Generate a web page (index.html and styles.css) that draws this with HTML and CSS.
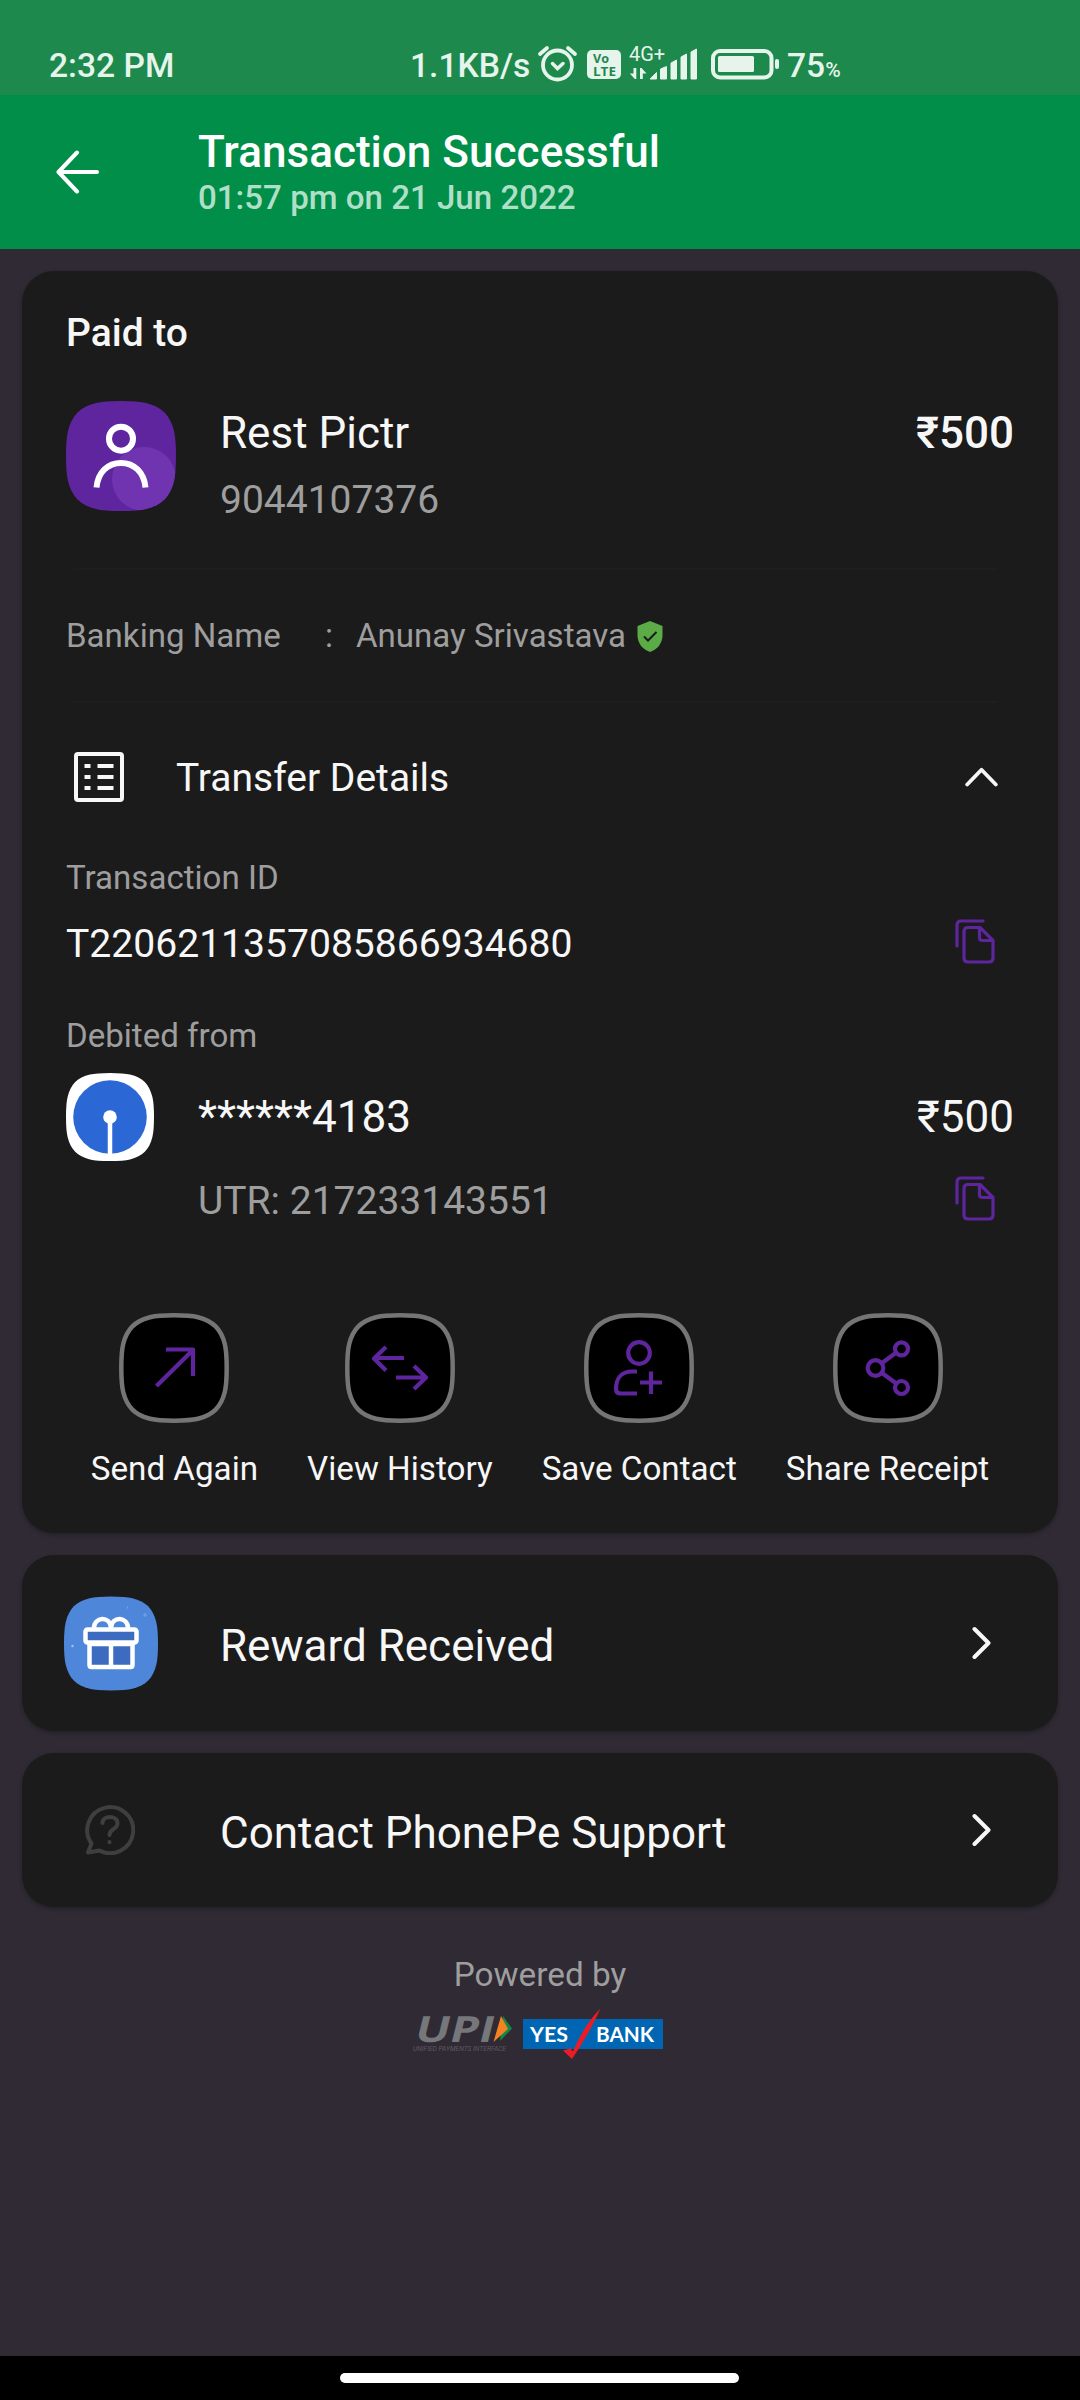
FILE: index.html
```html
<!DOCTYPE html>
<html lang="en">
<head>
<meta charset="utf-8">
<title>Transaction Successful</title>
<link rel="stylesheet" href="styles.css">
</head>
<body>
<svg class="defs" width="0" height="0">
  <symbol id="squircle" viewBox="0 0 110 110"><path d="M55 0Q72 0 80 2C96 6 104 14 108 30Q110 38 110 55Q110 72 108 80C104 96 96 104 80 108Q72 110 55 110Q38 110 30 108C14 104 6 96 2 80Q0 72 0 55Q0 38 2 30C6 14 14 6 30 2Q38 0 55 0Z"/></symbol>
  <symbol id="copy" viewBox="0 0 40 45"><g fill="none" stroke="#5f259f" stroke-width="3.2" stroke-linecap="round" stroke-linejoin="round"><path d="M2 27V6Q2 2 6 2H28"/><path d="M13 8.5H25L38 21.500V39Q38 43 34 43H13Q9 43 9 39V12.500Q9 8.500 13 8.500Z"/><path d="M24.500 9V18.500Q24.500 21.500 27.500 21.500H37"/></g></symbol>
  <symbol id="tile" viewBox="0 0 110 110"><path fill="#000" stroke="#757575" stroke-width="4.500" d="M55 2.300Q71 2.300 79 4.200C94 8 102 16 105.800 31Q107.700 39 107.700 55Q107.700 71 105.800 79C102 94 94 102 79 105.800Q71 107.700 55 107.700Q39 107.700 31 105.800C16 102 8 94 4.200 79Q2.300 71 2.300 55Q2.300 39 4.200 31C8 16 16 8 31 4.200Q39 2.300 55 2.300Z"/></symbol>
</svg>
<div class="screen">
  <div class="status">
    <span class="time">2:32 PM</span>
    <span class="speed">1.1KB/s</span>
    <svg class="status-icons" width="244" height="44" viewBox="536 42 244 44" fill="#e6f4ec">
      <g fill="none" stroke="#e6f4ec" stroke-linecap="round"><circle cx="557.500" cy="65" r="14.500" stroke-width="3.800"/><path d="M552.500 63.500l5 5 5.500-5" stroke-width="3.500"/><path d="M540 54l7-6M575 54l-7-6" stroke-width="3.800"/></g>
      <rect x="587" y="50" width="34" height="29" rx="5"/>
      <g fill="#1d894d" class="volte"><text x="593" y="62.500" textLength="16" lengthAdjust="spacingAndGlyphs">Vo</text><text x="593" y="75.500" textLength="23" lengthAdjust="spacingAndGlyphs">LTE</text></g>
      <text class="net" x="629" y="61" textLength="36">4G+</text>
      <path d="M633.500 68h2.800v11h-1.500l-5-5.500h3.700zM640 79h2.800v-5.500h3.700l-5-5.500H640z"/>
      <path d="M650 79l6.500-6.500V79zM660.500 69l6-2.500V79h-6zM671 63l5.500-3V79H671zM681 57l5.500-3V79H681zM691 52l5.500-3V79H691z" stroke="#e6f4ec" stroke-width="1" stroke-linejoin="round"/>
      <rect x="713" y="51" width="58.500" height="26.500" rx="7" fill="none" stroke="#e6f4ec" stroke-width="4"/><rect x="718" y="56" width="36" height="16" rx="1.500"/><rect x="775" y="59" width="4" height="10" rx="2"/>
    </svg>
    <span class="battery">75<small>%</small></span>
  </div>
  <header class="header">
    <svg width="44" height="44" viewBox="0 0 44 44" fill="none" stroke="#fff" stroke-width="4" stroke-linecap="round" stroke-linejoin="round"><path d="M41 22H2.500M21 2.500L2.500 22 21 41.500"/></svg>
    <div><h1>Transaction Successful</h1><p>01:57 pm on 21 Jun 2022</p></div>
  </header>
  <main>
    <section class="card paid">
      <h2>Paid to</h2>
      <div class="payee">
        <svg width="110" height="110" viewBox="0 0 110 110"><clipPath id="clip"><path d="M55 0Q72 0 80 2C96 6 104 14 108 30Q110 38 110 55Q110 72 108 80C104 96 96 104 80 108Q72 110 55 110Q38 110 30 108C14 104 6 96 2 80Q0 72 0 55Q0 38 2 30C6 14 14 6 30 2Q38 0 55 0Z"/></clipPath><use href="#squircle" fill="#5f259f"/><circle cx="78" cy="78" r="32" fill="#7034b1" clip-path="url(#clip)"/><g fill="none" stroke="#fff" stroke-width="6"><circle cx="55" cy="37.700" r="12"/><path d="M30.500 86.500C32 71 42 62 55 62S78 71 79.500 86.500"/></g></svg>
        <div class="grow"><div class="big">Rest Pictr</div><div class="phone">9044107376</div></div>
        <div class="amount medium">₹500</div>
      </div>
      <hr>
      <div class="banking"><span class="key">Banking Name</span><span class="colon">:</span><span>Anunay Srivastava</span>
        <svg width="26" height="31" viewBox="0 0 26 31"><path fill="#5bac46" d="M13 0L25.500 5V14C25.500 22 21 28 13 31C5 28 .5 22 .5 14V5Z"/><path d="M7 15.500l4 4 8.500-8.500" fill="none" stroke="#1b1b1b" stroke-width="2"/></svg>
      </div>
      <hr>
      <div class="transfer">
        <svg width="50" height="50" viewBox="0 0 50 50" fill="none" stroke="#f7f7f7"><rect x="2" y="2" width="46" height="46" rx="2" stroke-width="4"/><path d="M10.500 14h6M10.500 25h6M10.500 36h6M23.500 14h16M23.500 25h16M23.500 36h16" stroke-width="4"/></svg>
        <span class="grow">Transfer Details</span>
        <svg width="33" height="20" viewBox="0 0 33 20" fill="none" stroke="#f7f7f7" stroke-width="3.800" stroke-linecap="round" stroke-linejoin="round"><path d="M2.200 17.500L16.500 2.800 30.800 17.500"/></svg>
      </div>
      <div class="label txn-label">Transaction ID</div>
      <div class="copy-row txn"><span>T2206211357085866934680</span><svg width="40" height="45"><use href="#copy"/></svg></div>
      <div class="label debit-label">Debited from</div>
      <div class="account">
        <svg width="88" height="88" viewBox="0 0 88 88"><use href="#squircle" fill="#fff"/><circle cx="44" cy="44" r="36.800" fill="#2c68d5"/><circle cx="44" cy="44" r="6.800" fill="#fff"/><path d="M44 44V82" stroke="#fff" stroke-width="4.500"/></svg>
        <span class="grow">******4183</span><span class="amount">₹500</span>
      </div>
      <div class="copy-row utr"><span>UTR: 217233143551</span><svg width="40" height="45"><use href="#copy"/></svg></div>
      <div class="actions">
        <div class="action"><svg width="110" height="110" viewBox="0 0 110 110"><use href="#tile"/><path d="M37.500 73L74 37M47 36.500H74V63" class="line"/></svg><span>Send Again</span></div>
        <div class="action"><svg width="110" height="110" viewBox="0 0 110 110"><use href="#tile"/><path d="M59 45H29M41 34L29 45.500 41 57.500M51 64.500H81M69 53L81 64.500 69 76" class="line"/></svg><span>View History</span></div>
        <div class="action"><svg width="110" height="110" viewBox="0 0 110 110"><use href="#tile"/><circle cx="55" cy="40" r="10.800" class="line"/><path d="M53 58.500H48C37 58.500 32 66 32 76Q32 80.500 36.500 80.500H53M56 69.500H78M67 58.500V81" class="line"/></svg><span>Save Contact</span></div>
        <div class="action"><svg width="110" height="110" viewBox="0 0 110 110"><use href="#tile"/><g class="line"><circle cx="42.500" cy="55" r="7.800"/><circle cx="68.500" cy="35.800" r="6.500"/><circle cx="68.500" cy="74.500" r="6.500"/><path d="M49 50L63 39.800M49 60L63 70.300"/></g></svg><span>Share Receipt</span></div>
      </div>
    </section>
    <section class="card link reward">
      <svg class="gift" width="94" height="95" viewBox="0 0 94 95"><use href="#squircle" fill="#4e86da" width="94" height="95"/><circle cx="8.500" cy="50" r="1.200" fill="#a7c2ec"/><path d="M81 17v4M79 19h4M63.500 10.500v2" stroke="#79a3e3" stroke-width="1"/><g fill="#3c6bc0" stroke="#fff" stroke-width="4.500" stroke-linejoin="round"><path d="M25.500 48H68.500V69Q68.500 71 66.500 71H27.500Q25.500 71 25.500 69Z"/><path d="M47 48V71"/><path d="M30 32C30 21 46 19 47 32C48 19 64 21 64 32" fill="none"/><rect x="21.500" y="33.500" width="51" height="13" rx="2"/></g></svg>
      <span class="grow">Reward Received</span>
      <svg class="chev" width="20" height="34" viewBox="0 0 20 34"><path d="M2.500 3L16.500 17 2.500 31"/></svg>
    </section>
    <section class="card link support">
      <svg class="help" width="50" height="50" viewBox="0 0 50 50" fill="none" stroke="#3f3f3f" stroke-width="4" stroke-linecap="round" stroke-linejoin="round"><path d="M6.500 38.500A23 23 0 1 1 14.500 45.500L3 47.500Z"/><path d="M17.500 18C17.500 10 32.500 9.500 32.500 18.500C32.500 24.500 24.500 23.500 24.500 30"/><path d="M24.500 37v.2"/></svg>
      <span class="grow">Contact PhonePe Support</span>
      <svg class="chev" width="20" height="34" viewBox="0 0 20 34"><path d="M2.500 3L16.500 17 2.500 31"/></svg>
    </section>
  </main>
  <footer>
    <p>Powered by</p>
    <svg width="272" height="64" viewBox="402 2000 272 64">
      <text class="upi" transform="translate(413 2041.500) skewX(-14)" x="0" y="0" textLength="79" lengthAdjust="spacingAndGlyphs">UPI</text>
      <path d="M503 2016l9 12.500L500 2041z" fill="#128a46"/><path d="M501 2016l7 13L493.500 2042z" fill="#f58220"/>
      <text class="upi-sub" x="413" y="2050.500" textLength="93" lengthAdjust="spacingAndGlyphs">UNIFIED PAYMENTS INTERFACE</text>
      <rect x="523" y="2019" width="140" height="30" fill="#0066b3"/>
      <text class="bank" x="530" y="2041.500" textLength="38" lengthAdjust="spacingAndGlyphs">YES</text><text class="bank" x="596" y="2041.500" textLength="58" lengthAdjust="spacingAndGlyphs">BANK</text>
      <path d="M563 2050.500l7.500-2 2.500 3Q584 2025 600.500 2008.500Q589 2034 572 2059z" fill="#ed1c24"/>
    </svg>
  </footer>
  <div class="nav"><div class="pill"></div></div>
</div>
</body>
</html>
```
FILE: styles.css
```css
* { box-sizing: border-box; margin: 0; padding: 0; }
body { background: #2f2a34; font-family: Roboto, "Noto Sans", sans-serif; color: #f7f7f7; }
svg { display: block; flex: none; }
.defs { position: absolute; }
.screen { width: 1080px; height: 2400px; display: flex; flex-direction: column; overflow: hidden; }
.grow { flex: 1; }

.status { height: 95px; background: #1d894d; color: #e6f4ec; font-size: 33.6px; font-weight: 500; line-height: 40px; display: flex; align-items: flex-start; padding: 46px 0 0 49px; white-space: nowrap; }
.time { width: 361px; }
.speed { width: 126px; }
.status-icons { margin-top: -4px; }
.battery { margin-left: 7px; }
.battery small { font-size: 21px; }
.volte { font: 700 12px "Open Sans", sans-serif; }
.net { font-size: 20px; font-weight: 400; }

.header { height: 154px; background: #018e48; display: flex; padding: 32px 0 0 56px; }
.header svg { margin-top: 23px; }
.header div { margin-left: 98px; }
h1 { font-size: 44.1px; font-weight: 500; line-height: 52px; margin-top: -1px; color: #fff; }
.header p { font-size: 33.1px; font-weight: 500; line-height: 40px; color: #b0dfc8; }

main { padding: 22px 22px 0; display: flex; flex-direction: column; gap: 22px; }
.card { background: #1b1b1b; border-radius: 32px; box-shadow: 0 2px 4px rgba(0,0,0,.25); }
.paid { height: 1262px; padding: 39px 44px 0; font-size: 39px; line-height: 46px; }
h2 { font-size: 39px; font-weight: 500; line-height: 46px; }
.payee { display: flex; margin-top: 45px; height: 122px; }
.payee .grow { margin-left: 44px; padding-top: 6px; }
.big, .amount { font-size: 44px; line-height: 52px; }
.payee .amount { margin-top: 6px; }
.medium { font-weight: 500; }
.phone { margin-top: 18px; color: #9e9e9e; }
hr { border: 0; height: 2px; background: #1e1e1e; margin: 45px 17px 0 7px; }
.banking { display: flex; align-items: center; height: 40px; margin-top: 46px; font-size: 33.1px; line-height: 40px; color: #9e9e9e; }
.key { width: 259px; }
.colon { width: 31px; }
.banking svg { margin-left: 11px; }
.transfer { height: 50px; margin: 49px 16px 0 8px; display: flex; align-items: center; }
.transfer .grow { margin-left: 52px; padding-top: 2px; }
.label { font-size: 33.1px; line-height: 40px; color: #9e9e9e; }
.txn-label { margin-top: 56px; }
.debit-label { margin-top: 49px; }
.copy-row { display: flex; justify-content: space-between; align-items: center; height: 46px; padding-right: 19px; }
.copy-row svg { margin-top: -5px; }
.txn { margin-top: 23px; font-size: 39.1px; }
.account { display: flex; align-items: center; height: 88px; margin-top: 17px; font-size: 44.1px; }
.account .grow { margin-left: 44px; }
.utr { margin-top: 16px; padding-left: 132px; color: #9e9e9e; }
.utr span { padding-top: 1px; }
.utr svg { margin-top: -3px; }
.actions { display: flex; justify-content: center; gap: 49px; margin-top: 90px; }
.action { display: flex; flex-direction: column; align-items: center; gap: 26px; font-size: 33.2px; line-height: 40px; white-space: nowrap; }
.line { fill: none; stroke: #5f259f; stroke-width: 4.2; stroke-linejoin: round; }

.link { display: flex; align-items: center; font-size: 44px; line-height: 52px; padding: 0 66px 0 42px; }
.reward { height: 176px; }
.support { height: 154px; }
.gift { margin-right: 62px; }
.help { margin: 0 85px 0 21px; }
.link .grow { padding-top: 6px; }
.chev { fill: none; stroke: #f7f7f7; stroke-width: 4; stroke-linecap: round; stroke-linejoin: round; }

footer { flex: 1; padding-top: 48px; display: flex; flex-direction: column; align-items: center; color: #9e9e9e; font-size: 33.3px; line-height: 40px; }
footer svg { margin-top: 5px; margin-right: 4px; overflow: visible; }
.upi { font: 700 36px "Open Sans", sans-serif; fill: #75777a; }
.upi-sub { font: italic 7px Roboto, sans-serif; fill: #5e5a62; }
.bank { font: 700 21px Lato, sans-serif; fill: #fff; }
.nav { height: 44px; background: #000; padding: 17px 1px 0 0; }
.pill { width: 399px; height: 10px; border-radius: 5px; background: #fff; margin: 0 auto; }
```
